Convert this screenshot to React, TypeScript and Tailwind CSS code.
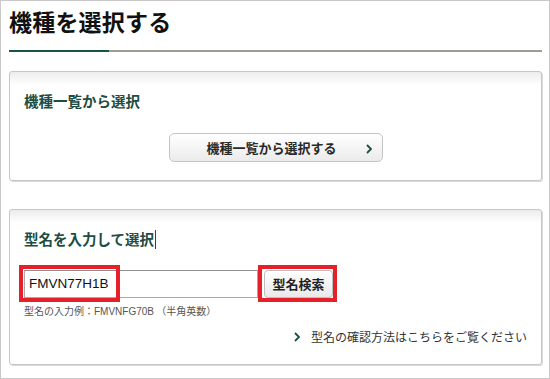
import React from "react";

const jp = "font-['Noto_Sans_CJK_JP','Noto_Sans',sans-serif]";

const Chevron = ({ className = "" }: { className?: string }) => (
  <svg viewBox="0 0 6 10" className={className} fill="none">
    <path d="M1 1l4 4-4 4" stroke="#1b4e40" strokeWidth="1.8" />
  </svg>
);

const Card = ({ children, className = "" }: { children: React.ReactNode; className?: string }) => (
  <div
    className={`border border-[#c6c6c6] rounded-[3px] bg-[linear-gradient(to_bottom,#ececec,#ffffff_13px)] shadow-[1px_1px_0_#dadada] ${className}`}
  >
    {children}
  </div>
);

export default function App() {
  return (
    <div className={`w-[550px] h-[379px] border border-[#c9c9c9] bg-white pl-[8px] pr-[7px] ${jp}`}>
      {/* page title */}
      <h1 className="pt-[9px] text-[23px] leading-[23px] font-bold text-[#111] tracking-[0.2px]">
        機種を選択する
      </h1>
      <div className="mt-[17px] flex h-[2px]">
        <div className="w-[100px] bg-[#175443]" />
        <div className="flex-1 bg-[#9d9d96]" />
      </div>

      {/* select from list */}
      <Card className="mt-[19px] h-[110px] pl-[14px]">
        <h2 className="pt-[19px] text-[14.5px] leading-[20px] font-bold text-[#1d4d41]">機種一覧から選択</h2>
        <div className="mt-[22px] flex justify-center pr-[14px]">
          <button className="relative w-[214px] h-[29px] rounded-[5px] border border-[#c4c4c4] bg-[linear-gradient(to_bottom,#ffffff,#ebebeb)] text-[13px] font-bold text-[#2a2a2a] flex items-center justify-center">
            <span className="-ml-[8px]">機種一覧から選択する</span>
            <Chevron className="absolute right-[10px] top-[10px] w-[6px] h-[10px]" />
          </button>
        </div>
      </Card>

      {/* select by model name */}
      <Card className="mt-[28px] h-[156px] pl-[14px] pr-[14px]">
        <h2 className="pt-[19px] text-[14.5px] leading-[20px] font-bold text-[#1d4d41] flex items-center">
          型名を入力して選択
          <span className="ml-[1px] w-[1px] h-[19px] bg-[#1d4d41]" />
        </h2>
        <div className="mt-[21px] flex items-start gap-[6px]">
          <div className="relative">
            <div className="w-[234px] h-[28px] border border-[#a8a8a8] border-t-[#8f8f8f] bg-white pl-[4px] flex items-center text-[13.5px] text-[#111] font-['Liberation_Sans',Arial,sans-serif]">
              FMVN77H1B
            </div>
            <div className="absolute -left-[5px] -top-[5px] w-[101px] h-[37px] border-[4px] border-[#e5202a]" />
          </div>
          <div className="relative">
            <button className="w-[69px] h-[28px] rounded-[4px] border border-[#bdbdbd] bg-[linear-gradient(to_bottom,#ffffff,#e9e9e9)] text-[13px] font-bold text-[#222] flex items-center justify-center">
              型名検索
            </button>
            <div className="absolute -left-[6px] -top-[5px] w-[79px] h-[37px] border-[4px] border-[#e5202a]" />
          </div>
        </div>
        <p className="mt-[6px] text-[10px] leading-[14px] text-[#555]">
          型名の入力例：<span className="font-['Liberation_Sans',Arial,sans-serif]">FMVNFG70B</span> （半角英数）
        </p>
        <div className="mt-[10px] flex justify-end items-center gap-[11px] text-[12px] leading-[16px] text-[#333]">
          <Chevron className="w-[6px] h-[10px]" />
          <span>型名の確認方法はこちらをご覧ください</span>
        </div>
      </Card>
    </div>
  );
}
